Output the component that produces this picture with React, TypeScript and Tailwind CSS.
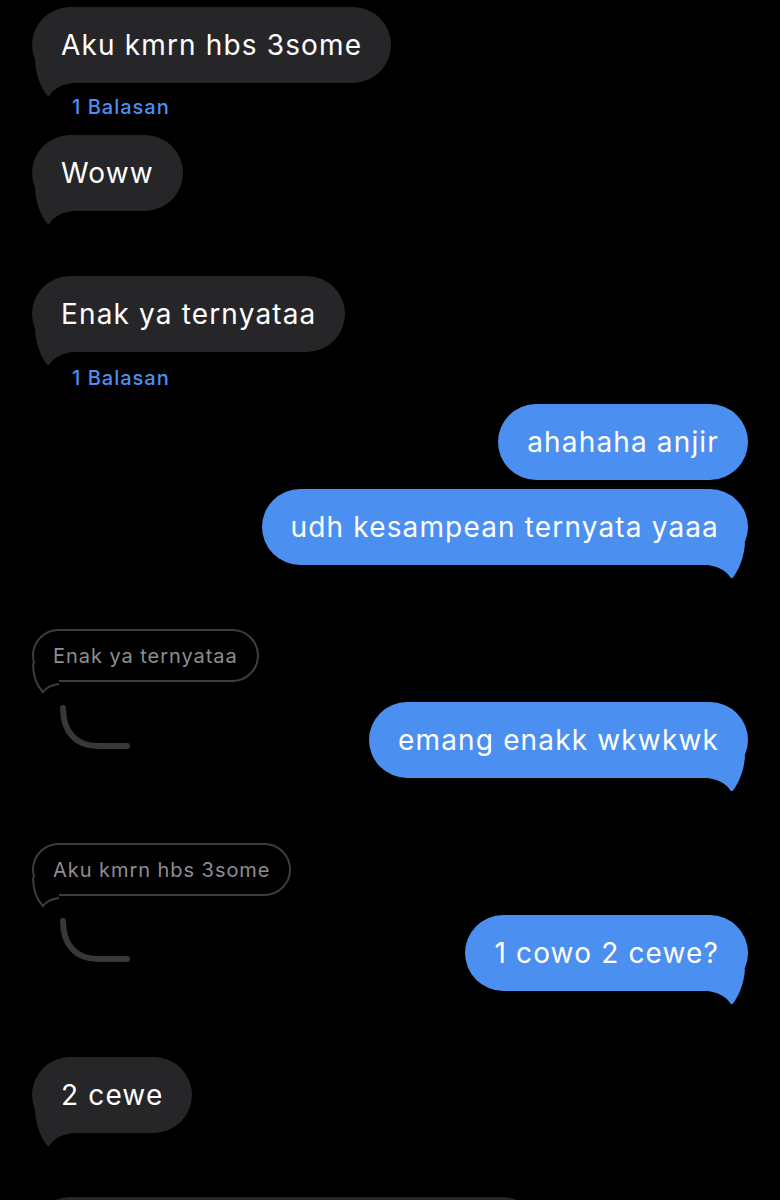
import type { ReactNode } from "react";

const font = { fontFamily: "Inter, 'Noto Sans', sans-serif" };

function Tail({ color, flip }: { color: string; flip?: boolean }) {
  return (
    <svg
      className={flip ? "absolute right-0 bottom-[-14px] -scale-x-100" : "absolute left-0 bottom-[-14px]"}
      width="40"
      height="40"
      viewBox="0 0 40 40"
    >
      <path d="M3 4 C4 20 10 32 15 38.5 Q16.5 40 17.5 38.5 C21 33 27 28 40 26 L40 4 Z" fill={color} />
    </svg>
  );
}

function Incoming({ children, tail = true, className = "" }: { children?: ReactNode; tail?: boolean; className?: string }) {
  return (
    <div className={"flex " + className}>
      <div className="relative flex h-[76px] items-center rounded-[38px] bg-[#262629] px-[29px] text-[28px] tracking-[1.15px] text-white">
        {children}
        {tail && <Tail color="#262629" />}
      </div>
    </div>
  );
}

function Outgoing({ children, tail = true }: { children: ReactNode; tail?: boolean }) {
  return (
    <div className="relative flex h-[76px] items-center rounded-[38px] bg-[#4b8ff1] px-[29px] text-[28px] tracking-[1.15px] text-white">
      {children}
      {tail && <Tail color="#4b8ff1" flip />}
    </div>
  );
}

function Replies({ className = "" }: { className?: string }) {
  return (
    <div className={"h-[24px] pl-[40px] text-[20px] leading-[24px] font-medium tracking-[1px] text-[#4b8ff1] " + className}>
      1 Balasan
    </div>
  );
}

function Quote({ text, className = "" }: { text: string; className?: string }) {
  return (
    <div className={"flex " + className}>
      <div className="relative flex h-[53px] items-center rounded-full border-2 border-[#3d3d40] px-[19px] text-[20px] tracking-[0.95px] text-[#8d8d92]">
        {text}
        <svg className="absolute left-[-2px] top-[28px]" width="30" height="36" viewBox="0 0 30 36">
          <path d="M1 4 C1 16 4 26 11 33 C14 29 18 26 27 25 L27 10 Z" fill="#000" />
          <path d="M1 4 C1 16 4 26 11 33 C14 29 18 26 27 25" fill="none" stroke="#3d3d40" strokeWidth="2" />
        </svg>
      </div>
    </div>
  );
}

function ThreadLine() {
  return (
    <svg className="ml-[26px] mt-[2px] shrink-0" width="80" height="50" viewBox="0 0 80 50">
      <path d="M5 4 C5 28 18 42 40 42 L69 42" fill="none" stroke="#38383a" strokeWidth="6" strokeLinecap="round" />
    </svg>
  );
}

export default function App() {
  return (
    <div className="h-[1200px] overflow-hidden bg-black px-[32px] pt-[7px]" style={font}>
      <Incoming>Aku kmrn hbs 3some</Incoming>
      <Replies className="mt-[12px]" />
      <Incoming className="mt-[16px]">Woww</Incoming>
      <Incoming className="mt-[65px]">Enak ya ternyataa</Incoming>
      <Replies className="mt-[14px]" />

      <div className="mt-[14px] flex justify-end">
        <Outgoing tail={false}>ahahaha anjir</Outgoing>
      </div>
      <div className="mt-[9px] flex justify-end">
        <Outgoing>udh kesampean ternyata yaaa</Outgoing>
      </div>

      <Quote text="Enak ya ternyataa" className="mt-[64px]" />
      <div className="mt-[20px] flex items-start justify-between">
        <ThreadLine />
        <Outgoing>emang enakk wkwkwk</Outgoing>
      </div>

      <Quote text="Aku kmrn hbs 3some" className="mt-[65px]" />
      <div className="mt-[19px] flex items-start justify-between">
        <ThreadLine />
        <Outgoing>1 cowo 2 cewe?</Outgoing>
      </div>

      <Incoming className="mt-[66px]">2 cewe</Incoming>
      <div className="mt-[64px] h-[76px] w-[508px] rounded-[38px] bg-[#262629]" />
    </div>
  );
}
